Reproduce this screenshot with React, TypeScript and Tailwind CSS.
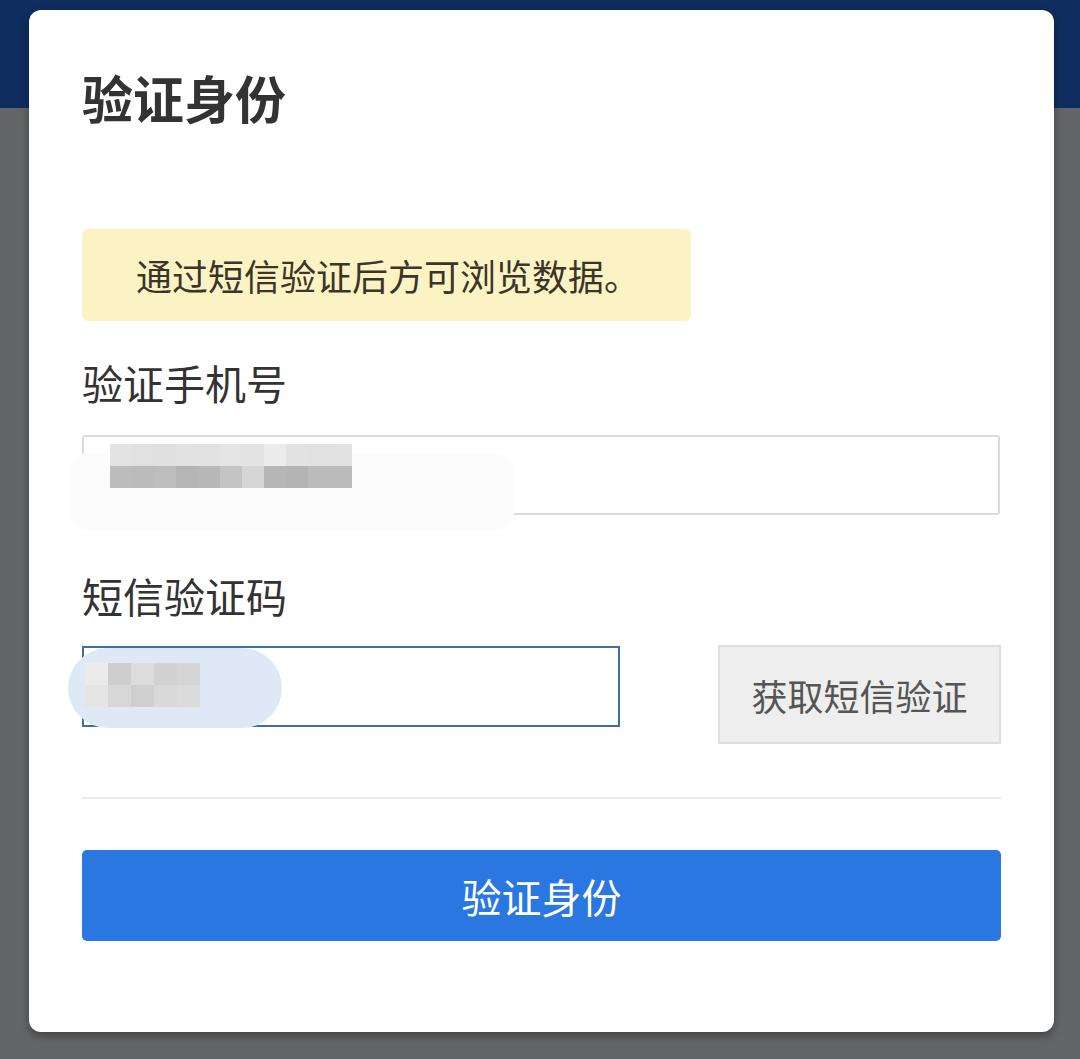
const phoneTop = ["#e3e3e3", "#e1e1e1", "#e0e0e0", "#e2e2e2", "#e1e1e1", "#e4e4e4", "#e3e3e3", "#ececec", "#e2e2e2", "#e1e1e1", "#e2e2e2"];
const phoneBottom = ["#bcbcbc", "#bbbbbb", "#bdbdbd", "#b5b5b5", "#b7b7b7", "#c4c4c4", "#d6d6d6", "#b6b6b6", "#b4b4b4", "#bababa", "#bbbbbb"];
const codeTop = ["#ebebeb", "#cecece", "#dcdcdc", "#d2d2d2", "#d4d4d4"];
const codeBottom = ["#e4e4e4", "#d7d7d7", "#cfcfcf", "#d9d9d9", "#dbdbdb"];

function Pixels({ top, bottom, cell }: { top: string[]; bottom: string[]; cell: string }) {
  return (
    <div className="flex flex-col">
      {[top, bottom].map((row, i) => (
        <div key={i} className="flex">
          {row.map((c, j) => (
            <div key={j} className={cell} style={{ backgroundColor: c }} />
          ))}
        </div>
      ))}
    </div>
  );
}

export default function App() {
  return (
    <div
      className="relative h-[1059px] w-[1080px] overflow-hidden bg-[#636567]"
      style={{ fontFamily: '"Noto Sans CJK SC", "Noto Sans", sans-serif' }}
    >
      <div className="h-[108px] bg-[#0f2e5f]" />

      {/* dialog */}
      <div className="absolute left-[29px] top-[10px] flex h-[1022px] w-[1025px] flex-col rounded-[12px] bg-white px-[53px] pt-[62px] shadow-[0_4px_10px_rgba(0,0,0,0.35)]">
        <h1 className="text-[51px] font-bold leading-none text-[#333]">验证身份</h1>

        <div className="mt-[106px] flex h-[92px] w-[609px] items-center rounded-[6px] bg-[#fcf3c5] pl-[54px]">
          <span className="text-[36px] leading-none text-[#3b3528]">通过短信验证后方可浏览数据。</span>
        </div>

        <label className="mt-[41px] text-[41px] leading-none text-[#333]">验证手机号</label>
        <div className="relative mt-[32px] h-[80px] w-[918px] rounded-[3px] border-2 border-[#dcdcdc] bg-white">
          <div className="absolute left-[-14px] top-[16px] h-[78px] w-[444px] rounded-[18px] bg-[#fcfcfc]" />
          <div className="absolute left-[26px] top-[7px]">
            <Pixels top={phoneTop} bottom={phoneBottom} cell="h-[22px] w-[22px]" />
          </div>
        </div>

        <label className="mt-[60px] text-[41px] leading-none text-[#333]">短信验证码</label>
        <div className="mt-[30px] flex items-start justify-between">
          <div className="relative h-[81px] w-[538px] border-2 border-[#3d6fae] bg-white">
            <div className="absolute left-[-16px] top-[0px] h-[80px] w-[214px] rounded-[40px] bg-[#dfe9f5]" />
            <div className="absolute left-[1px] top-[15px]">
              <Pixels top={codeTop} bottom={codeBottom} cell="h-[22px] w-[23px]" />
            </div>
          </div>
          <button className="mt-[-1px] flex h-[99px] w-[283px] items-center justify-center border-2 border-[#dedede] bg-[#eeeeee] text-[36px] leading-none text-[#555]">
            获取短信验证
          </button>
        </div>

        <div className="mt-[53px] h-[2px] w-[919px] bg-[#ebebeb]" />

        <button className="mt-[51px] flex h-[91px] w-[919px] items-center justify-center rounded-[5px] bg-[#2a77e2] text-[40px] leading-none text-white">
          验证身份
        </button>
      </div>
    </div>
  );
}
